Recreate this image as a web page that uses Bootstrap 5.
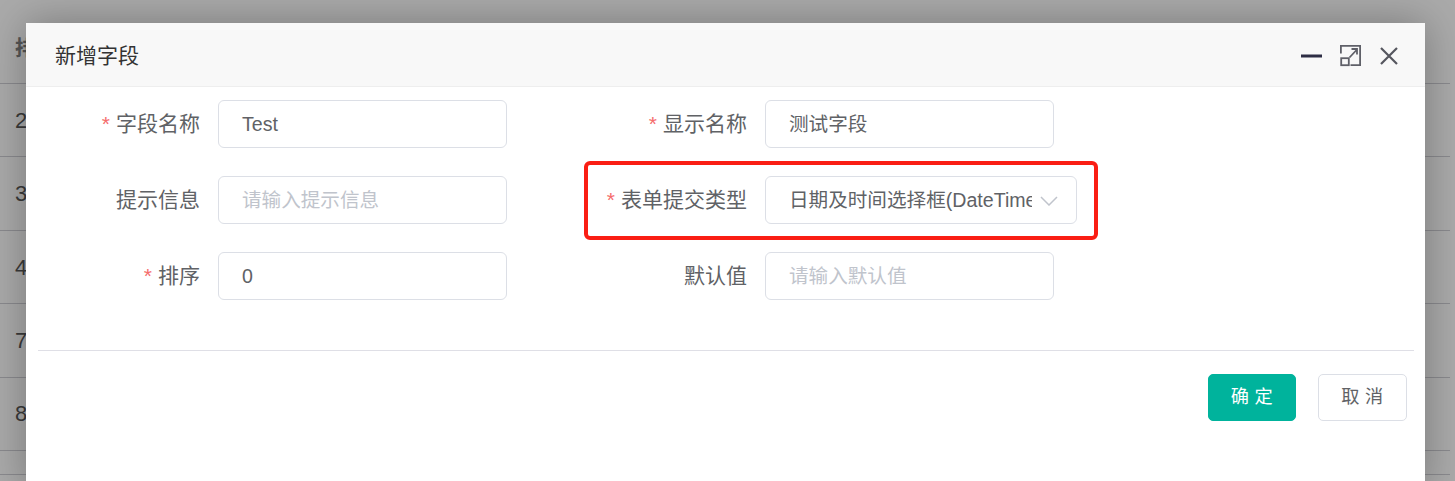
<!DOCTYPE html>
<html lang="zh"><head><meta charset="utf-8">
<link href="https://cdn.jsdelivr.net/npm/bootstrap@5.3.0/dist/css/bootstrap.min.css" rel="stylesheet">
<style>
html,body{height:481px;overflow:hidden}
body{font-family:"Liberation Sans","Noto Sans CJK SC",sans-serif;font-size:20px;color:#606266;background:#aaa;position:relative}
.bg-table{height:481px;padding:0 5px 0 0}
.bg-row{height:73.45px;border-bottom:1px solid #8a8a8e;color:#3a3a3a;padding-left:15px;font-size:22px;display:flex;align-items:center}
.bg-first{height:84px;font-weight:700;color:#555;font-size:21px;padding-top:13px}
.bg-short{height:24px}
.dlg{position:absolute;left:26px;top:23px;width:1399px;height:470px;background:#fff;border-radius:2px 2px 0 0;box-shadow:0 0 42px rgba(0,0,0,.3)}
.dlg-head{height:64px;background:#f8f8f8;border-bottom:1px solid #eee;padding:2px 27px 0 29px;color:#333}
.dlg-title{font-size:21px;line-height:1}
.dlg-tools{gap:18px}
.dlg-body{padding:13px 11px 0 12px}
.frm-grid{display:grid;grid-template-columns:180px 289px 258px 289px;row-gap:28px;height:251px;border-bottom:1px solid #dfdfe6;align-content:start}
.frm-label{height:48px;padding-right:18px;font-size:21px;color:#606266;display:flex;align-items:center;justify-content:flex-end;white-space:nowrap}
.req{color:#f56c6c;margin-right:6px}
.frm-input{height:48px;width:289px;border:1px solid #dcdfe6;border-radius:6px;padding:1px 23px 0;font-size:19.6px;color:#606266;display:flex;align-items:center;background:#fff;white-space:nowrap;overflow:hidden}
.ph{color:#c0c4cc}
.sel-box{width:312px;padding-right:0;position:relative}
.sel-text{width:243px;overflow:hidden;flex:none}
.sel-arrow{position:absolute;right:18px;top:19px}
.hl{position:absolute;left:558px;top:138px;width:514px;height:79px;border:4px solid #fa1e14;border-radius:6px;pointer-events:none}
.dlg-foot{padding-top:23px;padding-right:7px;gap:22px}
.act{height:47px;font-size:18.2px;letter-spacing:5.6px;border-radius:5px;padding:0 0 0 5px;display:flex;align-items:center;justify-content:center}
.act-ok{width:88px;background:#00b39c;color:#fff;border:1px solid #00b39c}
.act-no{width:89px;background:#fff;color:#606266;border:1px solid #dcdfe6}
.ic{display:block}
</style></head>
<body>
<div class="bg-table">
<div class="bg-row bg-first">排</div>
<div class="bg-row">2</div>
<div class="bg-row">3</div>
<div class="bg-row">4</div>
<div class="bg-row">7</div>
<div class="bg-row">8</div>
<div class="bg-row bg-short"></div>
</div>
<div class="dlg">
<div class="dlg-head d-flex align-items-center justify-content-between">
<div class="dlg-title">新增字段</div>
<div class="d-flex align-items-center dlg-tools">
<svg class="ic" width="21" height="22" viewBox="0 0 21 22"><rect x="0" y="9.5" width="21" height="3" fill="#2d2d44"/></svg>
<svg class="ic" width="22" height="22" viewBox="0 0 22 22" fill="none" stroke="#5f6068" stroke-width="1.8"><path d="M.9 8.5V.9h19.2v19.2H10.5"/><rect x="1.2" y="13.2" width="7.6" height="7"/><path d="M9.5 12.5l7.5-8M11.5 4H17v5.5"/></svg>
<svg class="ic" width="18" height="18" viewBox="0 0 18 18" fill="none" stroke="#55565e" stroke-width="2.2"><path d="M1 1l16 16M17 1L1 17"/></svg>
</div>
</div>
<div class="dlg-body">
<div class="frm-grid">
<div class="frm-label"><span class="req">*</span>字段名称</div>
<div class="frm-input">Test</div>
<div class="frm-label"><span class="req">*</span>显示名称</div>
<div class="frm-input">测试字段</div>
<div class="frm-label">提示信息</div>
<div class="frm-input"><span class="ph">请输入提示信息</span></div>
<div class="frm-label"><span class="req">*</span>表单提交类型</div>
<div class="frm-input sel-box"><span class="sel-text">日期及时间选择框(DateTimePicker)</span>
<svg class="sel-arrow" width="18" height="10" viewBox="0 0 18 10" fill="none" stroke="#c0c4cc" stroke-width="1.5"><path d="M1 1l8 8 8-8"/></svg></div>
<div class="frm-label"><span class="req">*</span>排序</div>
<div class="frm-input">0</div>
<div class="frm-label">默认值</div>
<div class="frm-input"><span class="ph">请输入默认值</span></div>
</div>
<div class="dlg-foot d-flex justify-content-end">
<button class="act act-ok" type="button">确定</button>
<button class="act act-no" type="button">取消</button>
</div>
</div>
<div class="hl"></div>
</div>
<script src="https://cdn.jsdelivr.net/npm/bootstrap@5.3.0/dist/js/bootstrap.bundle.min.js"></script>
</body></html>
